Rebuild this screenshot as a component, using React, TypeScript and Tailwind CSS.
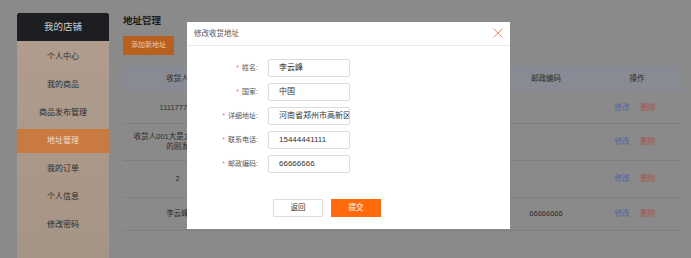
import React from "react";

const font = { fontFamily: '"Liberation Sans", "Noto Sans CJK SC", sans-serif' };

const menu = ["个人中心", "我的商品", "商品发布管理", "地址管理", "我的订单", "个人信息", "修改密码"];

const rows = [
  { name: ["111177777"], zip: "", h: "h-[32px]" },
  { name: ["收货人001大是大非的发生", "的刚发"], zip: "", h: "h-[37px]" },
  { name: ["2"], zip: "", h: "h-[37px]" },
  { name: ["李云峰"], zip: "66666666", h: "h-[33px]" },
];

const fields = [
  { label: "姓名:", value: "李云峰" },
  { label: "国家:", value: "中国" },
  { label: "详细地址:", value: "河南省郑州市高新区1019号" },
  { label: "联系电话:", value: "15444441111" },
  { label: "邮政编码:", value: "66666666" },
];

export default function App() {
  return (
    <div className="relative w-[691px] h-[258px] overflow-hidden bg-[#8a8a8a]" style={font}>
      <div className="flex h-full">
        {/* Sidebar */}
        <div className="ml-[17px] mt-[13px] w-[92px] flex flex-col rounded-t-[2px] overflow-hidden bg-gradient-to-b from-[#b19d8f] to-[#a59587]">
          <div className="h-[28px] bg-[#1d1e21] flex items-center justify-center text-[9.5px] text-[#cfcfcf]">我的店铺</div>
          <div className="flex flex-col gap-[4px] pt-[4px]">
            {menu.map((m) => (
              <div
                key={m}
                className={
                  "h-[24px] flex items-center justify-center text-[8px] " +
                  (m === "地址管理" ? "bg-[#c97a41] text-[#f2dccc]" : "text-[#2b2b2b]")
                }
              >
                {m}
              </div>
            ))}
          </div>
        </div>

        {/* Main */}
        <div className="ml-[14px] w-[559px] flex flex-col pt-[14px]">
          <div className="h-[14px] leading-[14px] text-[9.5px] font-bold text-[#1c1c1c]">地址管理</div>
          <div className="mt-[8px] w-[51px] h-[19px] bg-[#b8601e] flex items-center justify-center text-[7px] text-[#ecc9ad]">
            添加新地址
          </div>
          <div className="mt-[11px] flex flex-col">
            <div className="h-[26px] bg-[#888b93] flex items-center text-[7.5px] text-[#2e2e2e]">
              <div className="w-[109px] text-center">收货人</div>
              <div className="w-[268px]"></div>
              <div className="w-[92px] text-center">邮政编码</div>
              <div className="w-[90px] text-center">操作</div>
            </div>
            {rows.map((r, i) => (
              <div key={i} className={r.h + " flex items-center border-b border-[#7f7f7f] text-[7.5px] text-[#2e2e2e]"}>
                <div className="w-[109px] leading-[10px] flex flex-col items-center">
                  {r.name.map((l) => (
                    <div key={l} className="whitespace-nowrap">{l}</div>
                  ))}
                </div>
                <div className="w-[268px]"></div>
                <div className="w-[92px] text-center">{r.zip}</div>
                <div className="w-[90px] flex justify-center gap-[11px] pr-[4px]">
                  <span className="text-[#4a63a8]">修改</span>
                  <span className="text-[#ad4f4f]">删除</span>
                </div>
              </div>
            ))}
          </div>
        </div>
      </div>

      {/* Modal */}
      <div className="absolute left-[187px] top-[22px] w-[323px] h-[207px] bg-white flex flex-col">
        <div className="h-[24px] border-b border-[#e9e9e9] flex items-center justify-between pl-[7px] pr-[7px]">
          <span className="text-[7.5px] text-[#555]">修改收货地址</span>
          <svg width="10" height="10" viewBox="0 0 10 10" className="mt-[-1px]">
            <path d="M0.5 0.5 L9.5 9.5 M9.5 0.5 L0.5 9.5" stroke="#f2896f" strokeWidth="1" fill="none" />
          </svg>
        </div>
        <div className="flex flex-col gap-[6px] pt-[13px]">
          {fields.map((f) => (
            <div key={f.label} className="flex items-center h-[18px]">
              <div className="w-[81px] text-right text-[7px] text-[#555] pr-[10px] whitespace-nowrap">
                <span className="text-[#f56c6c] mr-[3px]">*</span>
                {f.label}
              </div>
              <div className="w-[82px] h-[18px] border border-[#dcdcdc] rounded-[2px] flex items-center pl-[10px] overflow-hidden whitespace-nowrap text-[8px] text-[#333]">
                {f.value}
              </div>
            </div>
          ))}
        </div>
        <div className="flex gap-[8px] pl-[86px] mt-[26px]">
          <div className="w-[50px] h-[18px] border border-[#dedede] bg-white flex items-center justify-center text-[7.5px] text-[#333]">返回</div>
          <div className="w-[50px] h-[18px] bg-[#ff6b0c] flex items-center justify-center text-[7.5px] text-white">提交</div>
        </div>
      </div>
    </div>
  );
}
